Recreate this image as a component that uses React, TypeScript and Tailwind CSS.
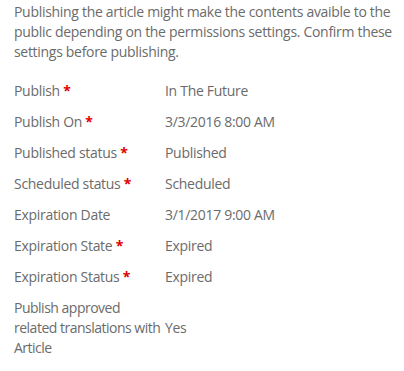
import React from "react";

const rows: { label: string; required?: boolean; value: string; tight?: boolean }[] = [
  { label: "Publish", required: true, value: "In The Future" },
  { label: "Publish On", required: true, value: "3/3/2016 8:00 AM" },
  { label: "Published status", required: true, value: "Published" },
  { label: "Scheduled status", required: true, value: "Scheduled" },
  { label: "Expiration Date", value: "3/1/2017 9:00 AM" },
  { label: "Expiration State", required: true, value: "Expired" },
  { label: "Expiration Status", required: true, value: "Expired" },
  { label: "Publish approved related translations with Article", value: "Yes", tight: true },
];

export default function App() {
  return (
    <div
      className="w-[404px] h-[371px] bg-white text-[#6b6b6b] text-[14px] leading-[20px] tracking-[-0.3px] pl-[14px] pr-[4px] pt-[2px]"
      style={{ fontFamily: '"Segoe UI", "Open Sans", sans-serif' }}
    >
      <p>
        Publishing the article might make the contents avaible to the public depending on the permissions settings. Confirm these settings before publishing.
      </p>
      <div className="mt-[13.5px] flex flex-col">
        {rows.map((r, i) => (
          <div key={i} className="flex items-center py-[5.5px]">
            <div className={r.tight ? "w-[151px] shrink-0 tracking-[-0.5px]" : "w-[151px] shrink-0"}>
              {r.label}
              {r.required && <span className="text-[#e00000] font-bold"> *</span>}
            </div>
            <div>{r.value}</div>
          </div>
        ))}
      </div>
    </div>
  );
}
